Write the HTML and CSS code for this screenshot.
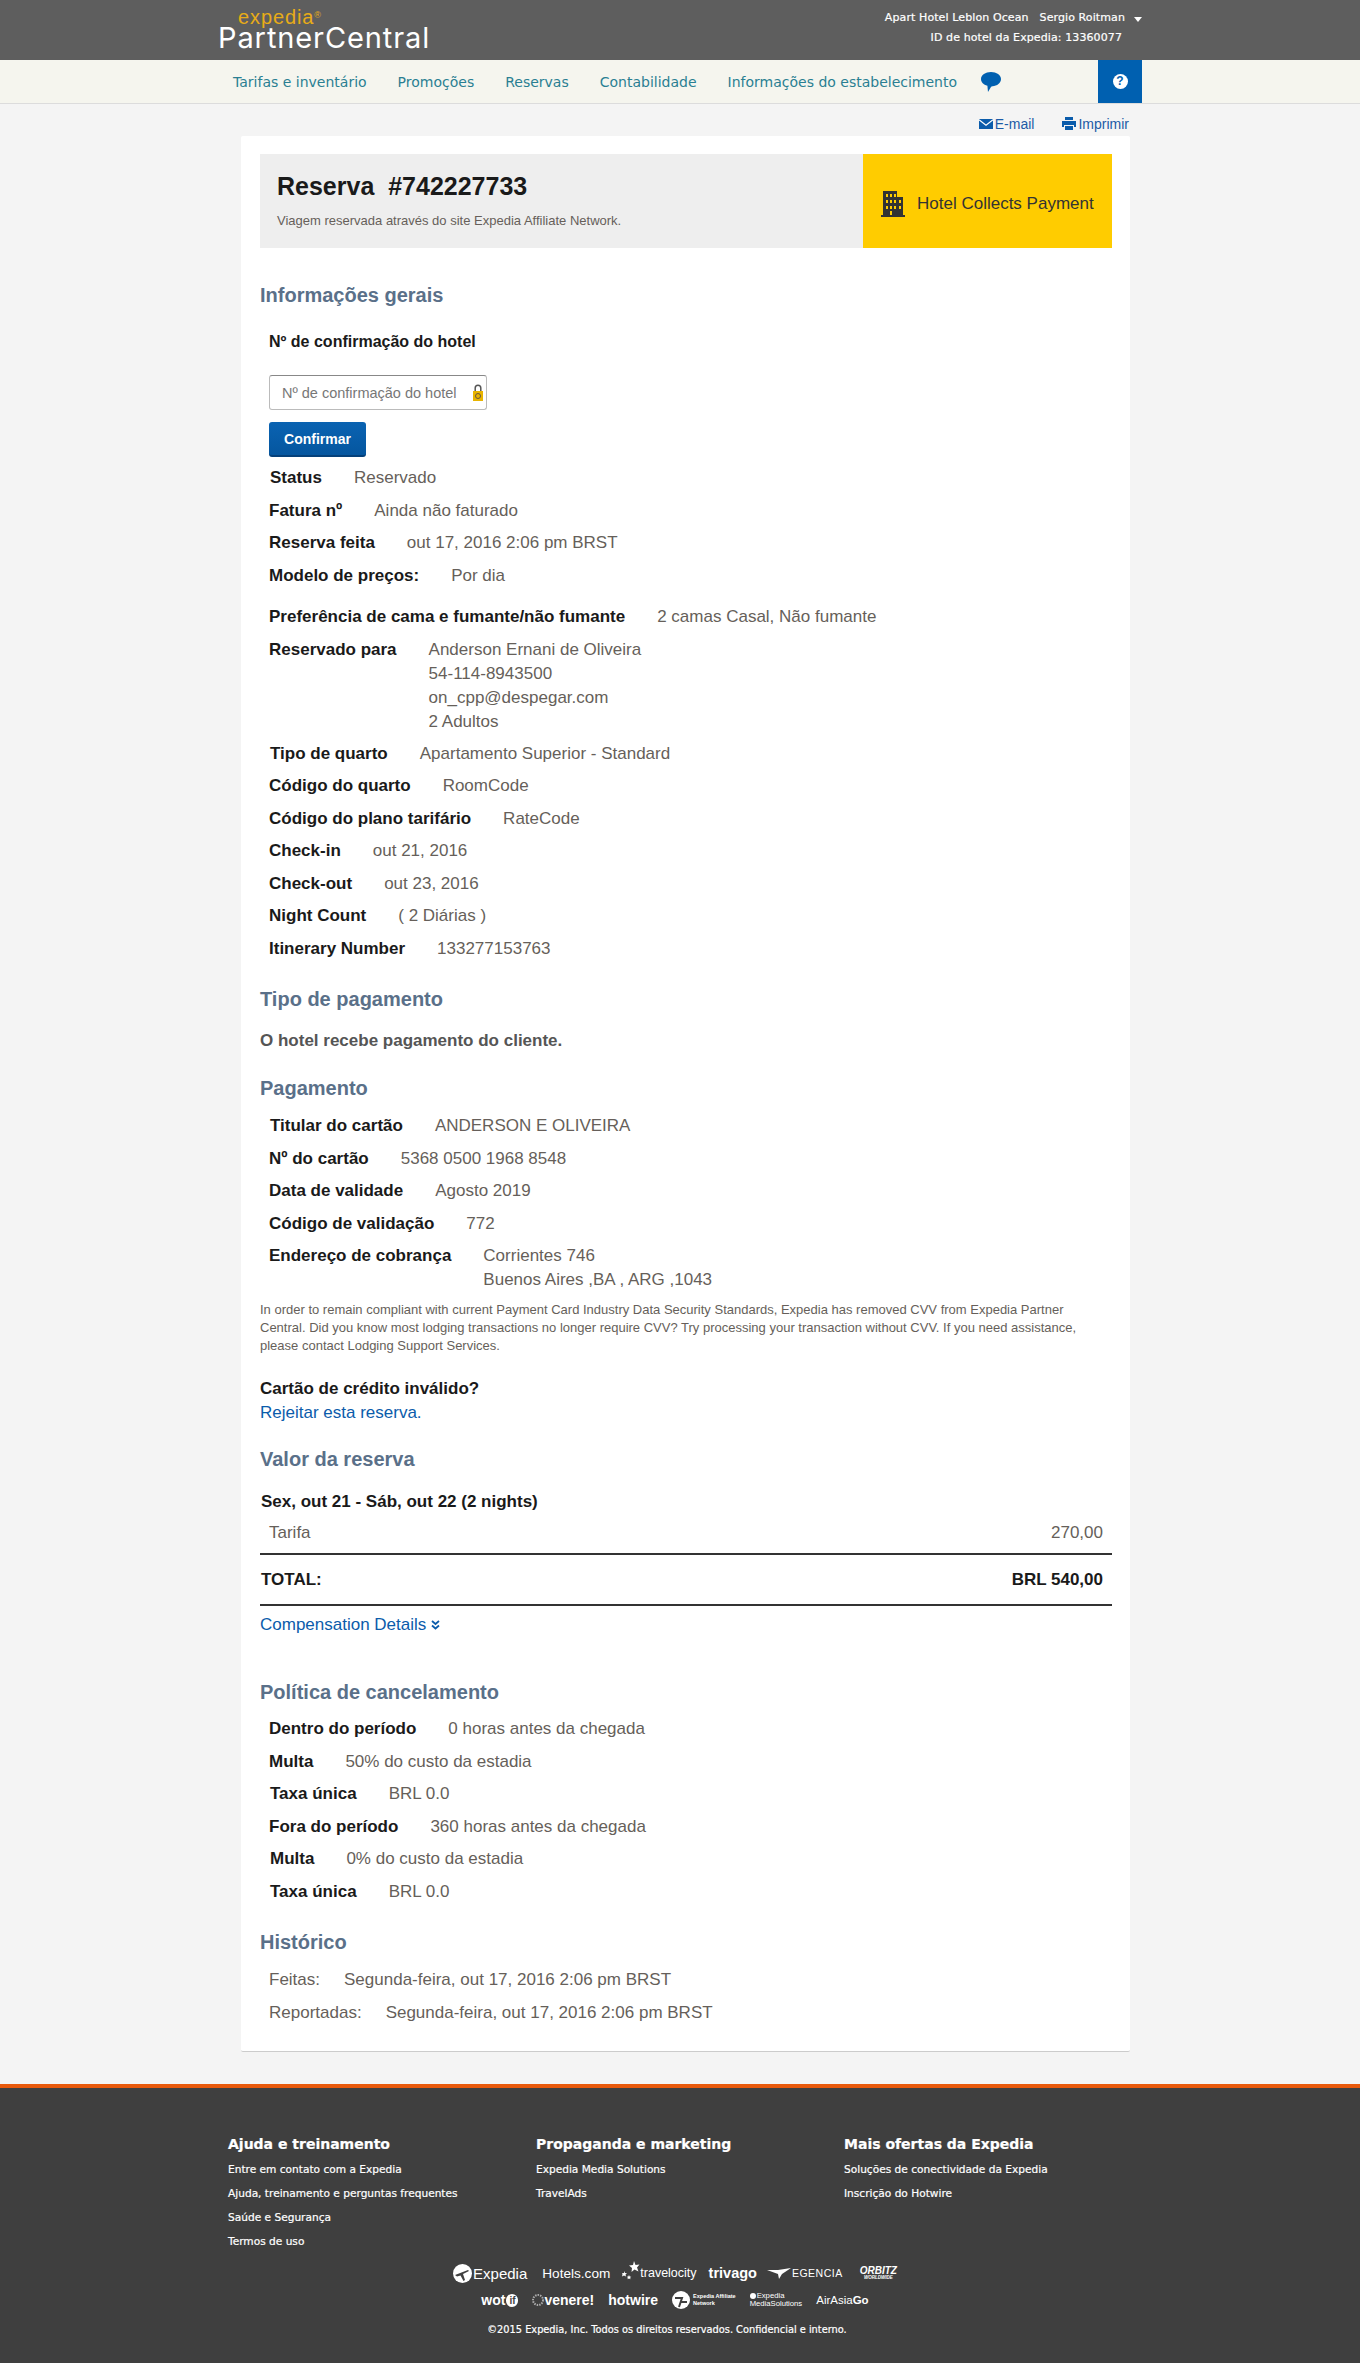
FILE: index.html
```html
<!DOCTYPE html>
<html lang="pt">
<head>
<meta charset="utf-8">
<title>Reserva #742227733</title>
<link rel="stylesheet" href="styles.css">
</head>
<body>
<header class="top">
  <div class="top-in">
    <div class="logo">
      <div class="logo-exp">expedia<sup>®</sup></div>
      <div class="logo-pc">PartnerCentral</div>
    </div>
    <div class="acct">
      <div class="acct-1"><span>Apart Hotel Leblon Ocean</span><span class="user">Sergio Roitman</span><span class="caret"></span></div>
      <div class="acct-2">ID de hotel da Expedia: 13360077</div>
    </div>
  </div>
</header>
<nav class="nav">
  <div class="nav-in">
    <a>Tarifas e inventário</a><a>Promoções</a><a>Reservas</a><a>Contabilidade</a><a>Informações do estabelecimento</a>
    <svg class="bubble" width="22" height="22" viewBox="0 0 22 22"><path fill="#0060b0" d="M11 1c5.500 0 10 2.900 10 7s-4 7-8.500 7.200c-.8 0-1.300.4-1.700 1L8 21l-.6-6.300C3.500 13.800 1 11.300 1 8c0-4.100 4.500-7 10-7z"/></svg>
    <div class="help"><span class="help-q">?</span></div>
  </div>
</nav>
<div class="tools">
  <a class="tool"><svg width="14" height="10" viewBox="0 0 14 10"><path fill="#0b5cab" d="M0 0h14v10H0z"/><path fill="none" stroke="#fff" stroke-width="1.200" d="M0 .8l7 5.400L14 .8"/></svg>E-mail</a>
  <a class="tool"><svg width="14" height="13" viewBox="0 0 14 13"><path fill="#0b5cab" d="M3 0h8v3H3zM0 4h14v6h-2V8H2v2H0zM3 9h8v4H3z"/></svg>Imprimir</a>
</div>
<main class="card">
  <section class="banner">
    <div class="banner-l">
      <h1>Reserva&nbsp; #742227733</h1>
      <p>Viagem reservada através do site Expedia Affiliate Network.</p>
    </div>
    <div class="banner-r">
      <svg width="24" height="26" viewBox="0 0 24 26"><path fill="#333" d="M2 0h14v6h6v18h2v2H0v-2h2z"/><path fill="#fc0" d="M5 3h2v3H5zm4 0h2v3H9zm4 0h2v3h-2zM5 9h2v3H5zm4 0h2v3H9zm4 0h2v3h-2zm5 0h2v3h-2zM5 15h2v3H5zm4 0h2v3H9zm4 0h2v3h-2zm5 0h2v3h-2zM9 20h2v4H9z"/></svg>
      <span>Hotel Collects Payment</span>
    </div>
  </section>

  <h2 class="h-first">Informações gerais</h2>
  <div class="conf-label">Nº de confirmação do hotel</div>
  <div class="conf-box">
    <span>Nº de confirmação do hotel</span>
    <svg class="lock" width="12" height="17" viewBox="0 0 12 17"><path fill="none" stroke="#555" stroke-width="1.500" d="M3.200 8V4a2.800 2.800 0 0 1 5.600 0v4"/><path fill="#e8b400" d="M1 7h10v10H1z"/><circle cx="6" cy="12" r="2.500" fill="none" stroke="#654" stroke-width="1"/></svg>
  </div>
  <button class="btn">Confirmar</button>

  <div class="rows r-a">
    <div class="row"><b class="nudge">Status</b><span>Reservado</span></div>
    <div class="row"><b>Fatura nº</b><span>Ainda não faturado</span></div>
    <div class="row"><b>Reserva feita</b><span>out 17, 2016 2:06 pm BRST</span></div>
    <div class="row"><b>Modelo de preços:</b><span>Por dia</span></div>
  </div>
  <div class="rows r-b">
    <div class="row"><b>Preferência de cama e fumante/não fumante</b><span>2 camas Casal, Não fumante</span></div>
    <div class="row top-row"><b>Reservado para</b><span class="stack"><span>Anderson Ernani de Oliveira</span><span>54-114-8943500</span><span>on_cpp@despegar.com</span><span>2 Adultos</span></span></div>
    <div class="row"><b class="nudge">Tipo de quarto</b><span>Apartamento Superior - Standard</span></div>
    <div class="row"><b>Código do quarto</b><span>RoomCode</span></div>
    <div class="row"><b>Código do plano tarifário</b><span>RateCode</span></div>
    <div class="row"><b>Check-in</b><span>out 21, 2016</span></div>
    <div class="row"><b>Check-out</b><span>out 23, 2016</span></div>
    <div class="row"><b>Night Count</b><span>( 2 Diárias )</span></div>
    <div class="row"><b>Itinerary Number</b><span>133277153763</span></div>
  </div>

  <h2 class="h-pay">Tipo de pagamento</h2>
  <p class="collect">O hotel recebe pagamento do cliente.</p>
  <h2 class="h-pg">Pagamento</h2>
  <div class="rows r-c">
    <div class="row"><b class="nudge">Titular do cartão</b><span>ANDERSON E OLIVEIRA</span></div>
    <div class="row"><b>Nº do cartão</b><span>5368 0500 1968 8548</span></div>
    <div class="row"><b>Data de validade</b><span>Agosto 2019</span></div>
    <div class="row"><b>Código de validação</b><span>772</span></div>
    <div class="row top-row"><b>Endereço de cobrança</b><span class="stack"><span>Corrientes 746</span><span>Buenos Aires ,BA , ARG ,1043</span></span></div>
  </div>
  <p class="legal">In order to remain compliant with current Payment Card Industry Data Security Standards, Expedia has removed CVV from Expedia Partner Central. Did you know most lodging transactions no longer require CVV? Try processing your transaction without CVV. If you need assistance, please contact Lodging Support Services.</p>
  <div class="invalid">Cartão de crédito inválido?</div>
  <a class="reject">Rejeitar esta reserva.</a>

  <h2 class="h-val">Valor da reserva</h2>
  <div class="night">Sex, out 21 - Sáb, out 22 (2 nights)</div>
  <div class="tarifa"><span>Tarifa</span><span>270,00</span></div>
  <div class="total"><span>TOTAL:</span><span>BRL 540,00</span></div>
  <a class="comp">Compensation Details <svg width="9" height="10" viewBox="0 0 9 10"><path fill="none" stroke="#0b5cab" stroke-width="1.800" d="M1 1l3.500 3L8 1M1 5.500l3.500 3 3.500-3"/></svg></a>

  <h2 class="h-pol">Política de cancelamento</h2>
  <div class="rows r-d">
    <div class="row"><b>Dentro do período</b><span>0 horas antes da chegada</span></div>
    <div class="row"><b>Multa</b><span>50% do custo da estadia</span></div>
    <div class="row"><b class="nudge">Taxa única</b><span>BRL 0.0</span></div>
    <div class="row"><b>Fora do período</b><span>360 horas antes da chegada</span></div>
    <div class="row"><b class="nudge">Multa</b><span>0% do custo da estadia</span></div>
    <div class="row"><b class="nudge">Taxa única</b><span>BRL 0.0</span></div>
  </div>
  <h2 class="h-hist">Histórico</h2>
  <div class="rows r-e">
    <div class="row"><span class="plain">Feitas:</span><span>Segunda-feira, out 17, 2016 2:06 pm BRST</span></div>
    <div class="row"><span class="plain">Reportadas:</span><span>Segunda-feira, out 17, 2016 2:06 pm BRST</span></div>
  </div>
</main>
<footer class="foot">
  <div class="foot-cols">
    <div class="col"><h3>Ajuda e treinamento</h3><a>Entre em contato com a Expedia</a><a>Ajuda, treinamento e perguntas frequentes</a><a>Saúde e Segurança</a><a>Termos de uso</a></div>
    <div class="col"><h3>Propaganda e marketing</h3><a>Expedia Media Solutions</a><a>TravelAds</a></div>
    <div class="col"><h3>Mais ofertas da Expedia</h3><a>Soluções de conectividade da Expedia</a><a>Inscrição do Hotwire</a></div>
  </div>
  <div class="brands b1">
    <span class="br br-exp"><svg width="19" height="19" viewBox="0 0 19 19"><circle cx="9.500" cy="9.500" r="9.500" fill="#fff"/><path fill="#3f3f3f" d="M2 11l13-5 1 1-6 3 2 6-1.500 1-3-5.500L4 12.500z"/></svg>Expedia</span>
    <span class="br br-hc">Hotels.com</span>
    <span class="br br-tv"><svg width="18" height="24" viewBox="0 0 18 24"><path fill="#fff" d="M12 0l1.500 4 4-.5-2.500 3 1.500 4-4-2-3 2.500.5-4-3-2.500 4-.5zM2 10l1 2 2 .2-1.500 1.300.5 2-2-1-2 1 .5-2L0 12.200l2-.2zM7 14l.7 1.500 1.600.2-1.200 1 .4 1.600L7 17.500l-1.500.8.400-1.600-1.200-1 1.600-.2z"/></svg><span>travelocity</span></span>
    <span class="br br-tr">trivago</span>
    <span class="br br-eg"><svg width="24" height="11" viewBox="0 0 24 11"><path fill="#fff" d="M0 2h11l13-2-9 6-3 5-1-5z"/></svg>EGENCIA</span>
    <span class="br br-or">ORBITZ<small>WORLDWIDE</small></span>
  </div>
  <div class="brands b2">
    <span class="br br-wo">wot<span class="wo-if">if</span></span>
    <span class="br br-ve"><svg width="12" height="12" viewBox="0 0 12 12"><circle cx="6" cy="6" r="5" fill="none" stroke="#aaa" stroke-width="2" stroke-dasharray="1.500 1"/></svg>venere!</span>
    <span class="br br-ho">hotwire</span>
    <span class="br br-ea"><svg width="18" height="18" viewBox="0 0 18 18"><circle cx="9" cy="9" r="9" fill="#fff"/><path fill="none" stroke="#3f3f3f" stroke-width="2" d="M3 7h7L7 16M9 11h6"/></svg><span>Expedia Affiliate<br>Network</span></span>
    <span class="br br-ms"><span class="ms-top"><i class="ms-dot"></i>Expedia</span><span>MediaSolutions</span></span>
    <span class="br br-aa">AirAsia<b>Go</b></span>
  </div>
  <div class="copy">©2015 Expedia, Inc. Todos os direitos reservados. Confidencial e interno.</div>
</footer>
</body>
</html>
```
FILE: styles.css
```css
* { box-sizing: border-box; }
html, body { margin: 0; padding: 0; }
body { width: 1360px; height: 2363px; background: #f4f4f4; font-family: "Liberation Sans", Arial, sans-serif; color: #665f5a; font-size: 15px; overflow: hidden; }
h1, h2, h3, p { margin: 0; }

.top { height: 60px; background: #5e5e5e; }
.top-in { width: 924px; margin-left: 218px; height: 60px; display: flex; justify-content: space-between; }
.logo { color: #fff; padding-top: 11px; }
.logo-exp { color: #e8ac17; font-size: 20px; line-height: 13px; letter-spacing: 0.900px; padding-left: 20px; }
.logo-exp sup { font-size: 9px; line-height: 0; vertical-align: 6px; }
.logo-pc { font-family: Inter, "Liberation Sans", sans-serif; font-size: 29px; line-height: 22px; letter-spacing: 0.900px; margin-top: 3px; }
.acct { font-family: "DejaVu Sans", sans-serif; font-size: 11px; letter-spacing: 0.100px; color: #fff; text-align: right; -webkit-text-stroke: 0.200px #fff; }
.acct-1 { display: flex; justify-content: flex-end; align-items: center; padding-top: 6px; height: 29px; }
.user { margin-left: 11px; }
.caret { width: 0; height: 0; border: 4px solid transparent; border-top: 5px solid #fff; border-bottom: 0; margin-left: 9px; margin-top: 3px; }
.acct-2 { padding-top: 2px; padding-right: 20px; }

.nav { height: 44px; background: #f5f5ee; border-bottom: 1px solid #dcdcdc; }
.nav-in { margin-left: 218px; width: 924px; height: 43px; display: flex; align-items: center; font-family: "DejaVu Sans", sans-serif; font-size: 14px; color: #2a7f92; }
.nav-in a { margin-left: 15px; margin-right: 16px; }
.bubble { margin-left: 7px; }
.help { margin-left: auto; width: 44px; height: 43px; background: #0060b0; display: flex; align-items: center; justify-content: center; }
.help-q { width: 15px; height: 15px; border-radius: 50%; background: #fff; color: #0060b0; font: bold 12px/15px "Liberation Sans", sans-serif; text-align: center; }

.tools { height: 32px; width: 1129px; display: flex; justify-content: flex-end; align-items: center; gap: 28px; font-size: 14px; color: #1c5ba6; padding-top: 7px; }
.tool { display: flex; align-items: center; gap: 2px; }

.card { margin-left: 241px; width: 889px; height: 1916px; background: #fff; border-bottom: 1px solid #ccc; border-radius: 2px; padding: 18px 18px 0 19px; }
.banner { display: flex; height: 94px; background: #eee; }
.banner-l { flex: 1; padding: 18px 17px; }
.banner-l h1 { font-size: 25px; line-height: 28px; color: #1a1a1a; }
.banner-l p { font-size: 13px; line-height: 16px; margin-top: 13px; }
.banner-r { width: 249px; background: #fc0; display: flex; align-items: center; padding: 6px 0 0 18px; gap: 12px; font-size: 17px; color: #333; }

h2 { font-size: 20px; line-height: 24px; color: #5a7089; }
.h-first { margin-top: 35px; }
.conf-label { font-weight: bold; font-size: 16px; line-height: 20px; color: #1a1a1a; margin: 25px 0 0 9px; }
.conf-box { margin: 23px 0 0 9px; width: 218px; height: 35px; border: 1px solid #bbb; border-top-color: #888; border-radius: 3px; background: #fff; display: flex; align-items: center; justify-content: space-between; padding: 0 2px 0 12px; font-size: 14.500px; color: #777; }
.btn { display: block; margin: 12px 0 0 9px; width: 97px; height: 35px; border: 0; border-radius: 3px; background: linear-gradient(#0a63b2, #05569f); border-bottom: 2px solid #04407a; color: #fff; font: bold 14px "Liberation Sans", sans-serif; }

.rows { margin-left: 9px; }
.row { display: flex; min-height: 32.500px; align-items: flex-start; line-height: 24px; font-size: 17px; }
.row b { font-size: 17px; color: #1a1a1a; margin-right: 32px; }
.row b.nudge { margin-left: 1px; }
.row .plain { font-size: 17px; margin-right: 24px; color: #665f5a; }
.stack { display: flex; flex-direction: column; }
.top-row { padding-bottom: 8px; }
.r-a { margin-top: 9px; }
.r-b { margin-top: 9px; }
h2.h-pay { margin-top: 18px; }
.collect { font-weight: bold; font-size: 17px; line-height: 24px; margin-top: 18px; color: #555; }
h2.h-pg { margin-top: 23px; }
.r-c { margin-top: 14px; }
.legal { font-size: 13px; line-height: 18px; margin-top: 1px; }
.invalid { font-weight: bold; font-size: 17px; line-height: 24px; color: #1a1a1a; margin-top: 22px; }
.reject { display: block; font-size: 17px; line-height: 24px; color: #0b5cab; }
h2.h-val { margin-top: 22px; }
.night { font-weight: bold; font-size: 17px; line-height: 24px; color: #1a1a1a; margin: 19px 0 0 1px; }
.tarifa { display: flex; justify-content: space-between; padding: 7px 9px; line-height: 24px; font-size: 17px; height: 41px; border-bottom: 2px solid #333; }
.total { display: flex; justify-content: space-between; padding: 13px 9px 0 1px; font-weight: bold; font-size: 17px; line-height: 24px; color: #1a1a1a; height: 51px; border-bottom: 2px solid #333; }
.comp { display: block; font-size: 17px; line-height: 24px; color: #0b5cab; margin-top: 7px; }
h2.h-pol { margin-top: 43px; }
.r-d { margin-top: 13px; }
h2.h-hist { margin-top: 18px; }
.r-e { margin-top: 14px; }

.foot { margin-top: 32px; height: 279px; background: #3f3f3f; border-top: 4px solid #e8590c; color: #fff; font-family: "DejaVu Sans", sans-serif; }
.foot-cols { display: flex; padding: 44px 0 0 228px; }
.col { width: 308px; display: flex; flex-direction: column; font-size: 10.600px; line-height: 24px; -webkit-text-stroke: 0.200px #fff; }
.col h3 { font-size: 14px; line-height: 24px; margin-bottom: 1px; }
.brands { display: flex; justify-content: center; align-items: center; font-family: "Liberation Sans", sans-serif; color: #fff; padding-right: 10px; }
.br { display: inline-flex; align-items: center; }
.b1 { margin-top: 6px; height: 28px; gap: 12px; }
.b2 { height: 26px; gap: 14px; }
.br-exp { font-size: 15px; gap: 1px; }
.br-hc { font-size: 13.600px; margin-left: 3px; }
.br-tv { font-size: 12.500px; }
.br-tr { font-size: 14.500px; font-weight: bold; }
.br-eg { font-size: 10.500px; letter-spacing: 0.500px; margin-left: -2px; gap: 1px; }
.br-or { font-size: 10px; font-weight: bold; font-style: italic; flex-direction: column; line-height: 9px; margin-left: 5px; }
.br-or small { font-size: 4.500px; line-height: 5px; }
.br-wo { font-size: 14px; font-weight: bold; }
.wo-if { margin-left: 1px; width: 12px; height: 13px; border-radius: 6px; background: #fff; color: #3f3f3f; font-size: 10px; line-height: 13px; text-align: center; }
.br-ve { font-size: 14px; font-weight: bold; }
.br-ho { font-size: 14px; font-weight: bold; }
.br-ea { font-size: 5.500px; line-height: 7px; gap: 3px; font-weight: bold; }
.br-ms { font-size: 7.700px; flex-direction: column; align-items: flex-start; line-height: 8px; }
.ms-top { display: inline-flex; align-items: center; gap: 1px; }
.ms-dot { width: 6px; height: 6px; border-radius: 50%; background: #fff; }
.br-aa { font-size: 11.500px; }
.copy { text-align: center; font-size: 9.800px; line-height: 16px; margin-top: 9px; padding-right: 26px; -webkit-text-stroke: 0.200px #fff; }
```
